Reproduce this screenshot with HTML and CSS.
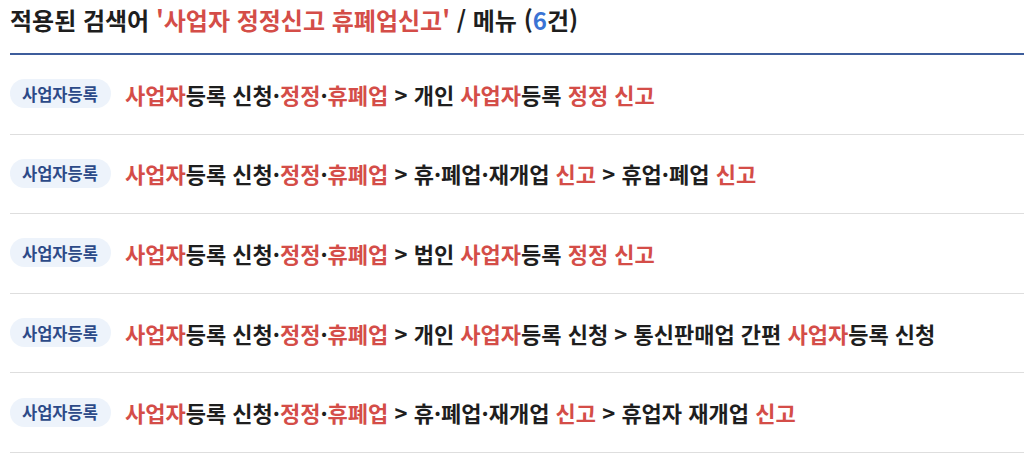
FILE: index.html
```html
<!DOCTYPE html>
<html lang="ko">
<head>
<meta charset="utf-8">
<title>검색 결과</title>
<link rel="stylesheet" href="styles.css">
</head>
<body>
<div class="page">
  <h2 class="title">적용된 검색어 <span class="hl">'사업자 정정신고 휴폐업신고'</span> / 메뉴 (<span class="count">6</span>건)</h2>
  <ul class="list">
    <li class="row"><span class="badge">사업자등록</span><span class="path"><span class="hl">사업자</span>등록 신청·<span class="hl">정정</span>·<span class="hl">휴폐업</span> &gt; 개인 <span class="hl">사업자</span>등록 <span class="hl">정정</span> <span class="hl">신고</span></span></li>
    <li class="row"><span class="badge">사업자등록</span><span class="path"><span class="hl">사업자</span>등록 신청·<span class="hl">정정</span>·<span class="hl">휴폐업</span> &gt; 휴·폐업·재개업 <span class="hl">신고</span> &gt; 휴업·폐업 <span class="hl">신고</span></span></li>
    <li class="row"><span class="badge">사업자등록</span><span class="path"><span class="hl">사업자</span>등록 신청·<span class="hl">정정</span>·<span class="hl">휴폐업</span> &gt; 법인 <span class="hl">사업자</span>등록 <span class="hl">정정</span> <span class="hl">신고</span></span></li>
    <li class="row"><span class="badge">사업자등록</span><span class="path"><span class="hl">사업자</span>등록 신청·<span class="hl">정정</span>·<span class="hl">휴폐업</span> &gt; 개인 <span class="hl">사업자</span>등록 신청 &gt; 통신판매업 간편 <span class="hl">사업자</span>등록 신청</span></li>
    <li class="row"><span class="badge">사업자등록</span><span class="path"><span class="hl">사업자</span>등록 신청·<span class="hl">정정</span>·<span class="hl">휴폐업</span> &gt; 휴·폐업·재개업 <span class="hl">신고</span> &gt; 휴업자 재개업 <span class="hl">신고</span></span></li>
  </ul>
</div>
</body>
</html>
```
FILE: styles.css
```css
html, body {
  margin: 0;
  padding: 0;
  background: #ffffff;
}
body {
  font-family: "Noto Sans CJK KR", "Noto Sans", sans-serif;
  color: #222222;
}
.page {
  padding: 0 0 0 10px;
}
.title {
  margin: 0;
  padding: 2px 0 0 0;
  box-sizing: border-box;
  height: 55px;
  font-size: 24px;
  font-weight: 700;
  line-height: 36px;
  color: #1e1e1e;
  border-bottom: 2px solid #3d5d9c;
}
.hl {
  color: #d44d48;
}
.count {
  color: #3a73d4;
}
.list {
  list-style: none;
  margin: 0;
  padding: 0;
}
.row {
  display: flex;
  align-items: center;
  gap: 14px;
  height: 79.6px;
  box-sizing: border-box;
  border-bottom: 1px solid #dedede;
  padding-bottom: 1px;
}
.badge {
  display: inline-flex;
  align-items: center;
  height: 29px;
  padding: 0 13px 0 12px;
  border-radius: 15px;
  background: #edf3fb;
  color: #2c4a88;
  font-size: 16.5px;
  font-weight: 700;
}
.path {
  font-size: 22px;
  font-weight: 700;
  color: #1e1e1e;
}
```
